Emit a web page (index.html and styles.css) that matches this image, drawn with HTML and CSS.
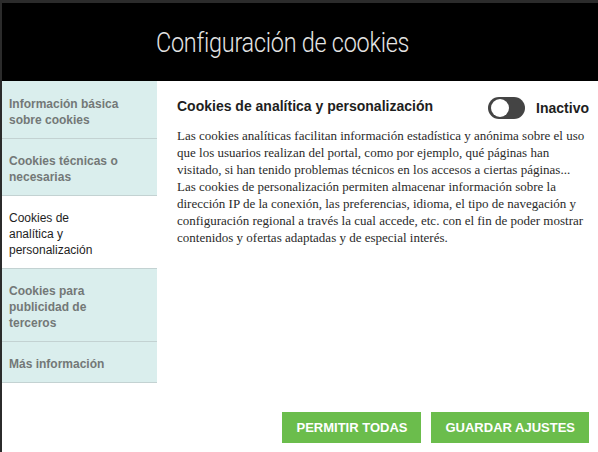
FILE: index.html
```html
<!DOCTYPE html>
<html lang="es">
<head>
<meta charset="utf-8">
<title>Configuración de cookies</title>
<link rel="stylesheet" href="styles.css">
</head>
<body>
<div class="modal">
  <header class="modal-header">
    <h1 class="title">Configuración de cookies</h1>
  </header>
  <div class="modal-body">
    <nav class="sidebar">
      <div class="tab">Información básica sobre cookies</div>
      <div class="tab">Cookies técnicas o necesarias</div>
      <div class="tab active">Cookies de analítica y personalización</div>
      <div class="tab">Cookies para publicidad de terceros</div>
      <div class="tab">Más información</div>
    </nav>
    <main class="content">
      <div class="section-head">
        <h2 class="section-title">Cookies de analítica y personalización</h2>
        <div class="switch-wrap">
          <span class="switch"><span class="knob"></span></span>
          <span class="switch-label">Inactivo</span>
        </div>
      </div>
      <p class="desc">Las cookies analíticas facilitan información estadística y anónima sobre el uso que los usuarios realizan del portal, como por ejemplo, qué páginas han visitado, si han tenido problemas técnicos en los accesos a ciertas páginas... Las cookies de personalización permiten almacenar información sobre la dirección IP de la conexión, las preferencias, idioma, el tipo de navegación y configuración regional a través la cual accede, etc. con el fin de poder mostrar contenidos y ofertas adaptadas y de especial interés.</p>
      <div class="actions">
        <button class="btn">PERMITIR TODAS</button>
        <button class="btn">GUARDAR AJUSTES</button>
      </div>
    </main>
  </div>
</div>
</body>
</html>
```
FILE: styles.css
```css
html, body {
  margin: 0;
  padding: 0;
  height: 100%;
}
body {
  background: #2b2b2b;
  overflow: hidden;
  font-family: "Liberation Sans", Arial, sans-serif;
}
.modal {
  margin: 3px 0 0 2px;
  height: 449px;
  background: #fff;
  display: flex;
  flex-direction: column;
}
.modal-header {
  height: 78px;
  background: #000;
  display: flex;
  align-items: center;
  padding-left: 154px;
  flex: none;
}
.title {
  margin: 0;
  color: #e4e4e4;
  font-family: Roboto, "Open Sans", sans-serif;
  font-weight: 300;
  font-size: 28px;
  letter-spacing: -0.3px;
  line-height: 1;
  padding-top: 1px;
  transform: scaleX(0.837);
  transform-origin: left center;
  white-space: nowrap;
}
.modal-body {
  flex: 1;
  display: flex;
  min-height: 0;
}
.sidebar {
  width: 155px;
  flex: none;
  align-self: flex-start;
  padding-top: 1px;
  background: #daeeed;
  border-bottom: 1px solid #c3d2d2;
}
.tab {
  padding: 14px 36px 10px 7px;
  font-size: 12px;
  line-height: 16px;
  font-weight: bold;
  color: #737877;
  border-bottom: 1px solid #c3d2d2;
}
.tab:last-child {
  border-bottom: none;
}
.tab.active {
  background: #fff;
  color: #1e1e1e;
  font-weight: normal;
  padding-right: 44px;
}
.content {
  flex: 1;
  padding: 13px 9px 9px 20px;
  display: flex;
  flex-direction: column;
}
.section-head {
  display: flex;
  align-items: center;
  justify-content: space-between;
  height: 24px;
}
.section-title {
  margin: 0;
  font-size: 14px;
  font-weight: bold;
  color: #1e1e1e;
}
.switch-wrap {
  display: flex;
  align-items: center;
  gap: 11px;
  margin-top: 4px;
}
.switch {
  width: 37px;
  height: 22px;
  border-radius: 11px;
  background: #444;
  display: flex;
  align-items: center;
  padding-left: 3px;
  box-sizing: border-box;
}
.knob {
  width: 18px;
  height: 18px;
  border-radius: 50%;
  background: #fff;
}
.switch-label {
  font-size: 14px;
  font-weight: bold;
  color: #1e1e1e;
}
.desc {
  margin: 9px 0 0;
  font-family: "Liberation Serif", "Times New Roman", serif;
  font-size: 13px;
  line-height: 17px;
  color: #2a2a2a;
}
.actions {
  margin-top: auto;
  display: flex;
  justify-content: flex-end;
  gap: 10px;
}
.btn {
  background: #6bbd4c;
  color: #fff;
  border: none;
  height: 31px;
  padding: 0 14px;
  font-family: "Liberation Sans", Arial, sans-serif;
  font-size: 13px;
  font-weight: bold;
}
```
